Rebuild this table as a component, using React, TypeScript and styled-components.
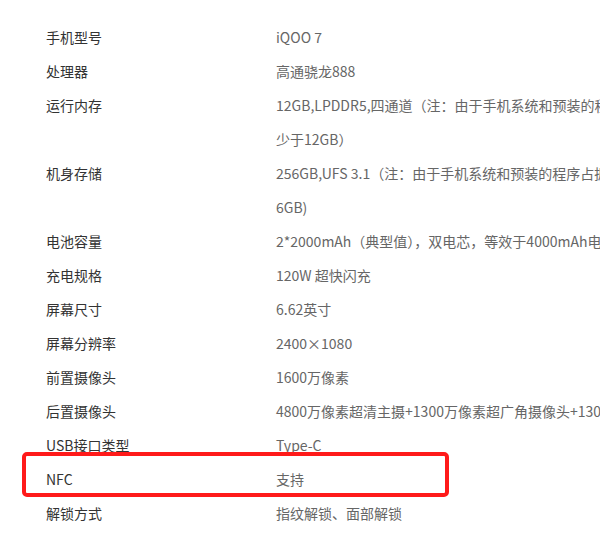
import React from 'react';
import styled, { createGlobalStyle } from 'styled-components';

const GlobalStyle = createGlobalStyle`
  html, body {
    margin: 0;
    padding: 0;
    background: #fff;
    overflow: hidden;
  }
`;

const Page = styled.div`
  position: relative;
  width: 600px;
  height: 548px;
  overflow: hidden;
  background: #fff;
  font-family: 'Noto Sans CJK SC', 'Noto Sans', sans-serif;
  font-size: 14px;
`;

const SpecTable = styled.div`
  display: flex;
  flex-direction: column;
  padding: 20px 0 0 46px;
`;

const Row = styled.div`
  display: grid;
  grid-template-columns: 230px max-content;
  line-height: 34px;
`;

const Label = styled.div`
  color: #333;
  white-space: nowrap;
`;

const Value = styled.div`
  color: #666;
  white-space: nowrap;
`;

const Highlight = styled.div`
  position: absolute;
  left: 22px;
  top: 452px;
  width: 427px;
  height: 45px;
  box-sizing: border-box;
  border: 4px solid #ff1a1a;
  border-radius: 5px;
`;

interface Spec {
  label: string;
  lines: string[];
}

const SPECS: Spec[] = [
  { label: '手机型号', lines: ['iQOO 7'] },
  { label: '处理器', lines: ['高通骁龙888'] },
  {
    label: '运行内存',
    lines: ['12GB,LPDDR5,四通道（注：由于手机系统和预装的程序占据部分存储空间，实际可用内存', '少于12GB）'],
  },
  {
    label: '机身存储',
    lines: ['256GB,UFS 3.1（注：由于手机系统和预装的程序占据部分存储空间，实际可用容量少于25', '6GB)'],
  },
  { label: '电池容量', lines: ['2*2000mAh（典型值），双电芯，等效于4000mAh电池'] },
  { label: '充电规格', lines: ['120W 超快闪充'] },
  { label: '屏幕尺寸', lines: ['6.62英寸'] },
  { label: '屏幕分辨率', lines: ['2400×1080'] },
  { label: '前置摄像头', lines: ['1600万像素'] },
  { label: '后置摄像头', lines: ['4800万像素超清主摄+1300万像素超广角摄像头+1300万像素长焦人像镜头'] },
  { label: 'USB接口类型', lines: ['Type-C'] },
  { label: 'NFC', lines: ['支持'] },
  { label: '解锁方式', lines: ['指纹解锁、面部解锁'] },
];

const App: React.FC = () => {
  return (
    <Page>
      <GlobalStyle />
      <SpecTable>
        {SPECS.map((spec) => (
          <Row key={spec.label}>
            <Label>{spec.label}</Label>
            <Value>
              {spec.lines.map((line, i) => (
                <div key={i}>{line}</div>
              ))}
            </Value>
          </Row>
        ))}
      </SpecTable>
      <Highlight />
    </Page>
  );
};

export default App;
